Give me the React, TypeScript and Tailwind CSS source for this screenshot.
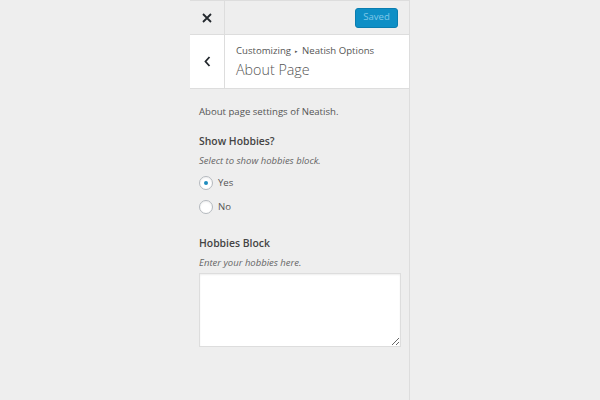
import React from "react";

function Radio({ label, checked }: { label: string; checked?: boolean }) {
  return (
    <label className="flex h-[24px] items-center gap-[5px] text-[9.6px] text-[#555]">
      <span className="flex h-[14px] w-[14px] items-center justify-center rounded-full border border-[#b4b9be] bg-white shadow-[inset_0_1px_2px_rgba(0,0,0,0.07)]">
        {checked && <span className="h-[4px] w-[4px] rounded-full bg-[#1e8cbe]" />}
      </span>
      {label}
    </label>
  );
}

export default function App() {
  return (
    <div
      className="flex h-[400px] w-[600px] bg-[#eeeeee]"
      style={{ fontFamily: '"Open Sans", "Liberation Sans", sans-serif' }}
    >
      <div className="ml-[190px] flex h-full w-[220px] flex-col border-r border-[#dddddd]">
        {/* top bar */}
        <div className="flex h-[35px] items-center border-b border-t border-[#dddddd]">
          <div className="flex h-full w-[35px] items-center justify-center border-r border-[#dddddd]">
            <svg width="10" height="10" viewBox="0 0 10 10">
              <path d="M1 1L9 9M9 1L1 9" stroke="#23282d" strokeWidth="1.8" />
            </svg>
          </div>
          <div className="ml-auto mr-[11px] flex h-[20px] w-[43px] items-center justify-center rounded-[3px] border border-[#0a7db0] bg-[#0e8fc6] text-[9.6px] text-[#7fc8e8]">
            Saved
          </div>
        </div>

        {/* back / title */}
        <div className="flex h-[54px] border-b border-[#dddddd] bg-white">
          <div className="flex h-full w-[35px] items-center justify-center border-r border-[#dddddd]">
            <svg width="7" height="11" viewBox="0 0 7 11">
              <path d="M5.5 1L1.5 5.5L5.5 10" fill="none" stroke="#23282d" strokeWidth="1.8" />
            </svg>
          </div>
          <div className="flex flex-col justify-center pl-[11px] pt-[1px]">
            <div className="flex items-center text-[9.6px] leading-[14px] text-[#555]">
              Customizing
              <span className="mx-[4px] text-[5px] leading-none">▸</span>
              Neatish Options
            </div>
            <div className="mt-[2px] text-[14.3px] font-light leading-[20px] text-[#555]">
              About Page
            </div>
          </div>
        </div>

        {/* content */}
        <div className="flex flex-col px-[9px] pt-[16px]">
          <p className="text-[9.6px] leading-[14px] text-[#555]">About page settings of Neatish.</p>

          <div className="mt-[15px] text-[10.4px] font-semibold leading-[14px] text-[#444]">
            Show Hobbies?
          </div>
          <div className="mt-[6px] text-[9.5px] italic leading-[14px] text-[#666]">
            Select to show hobbies block.
          </div>
          <div className="mt-[3px] flex flex-col">
            <Radio label="Yes" checked />
            <Radio label="No" />
          </div>

          <div className="mt-[17px] text-[10.4px] font-semibold leading-[14px] text-[#444]">
            Hobbies Block
          </div>
          <div className="mt-[6px] text-[9.5px] italic leading-[14px] text-[#666]">
            Enter your hobbies here.
          </div>
          <textarea className="mt-[3px] h-[74px] w-[202px] resize-y border border-[#dddddd] bg-white shadow-[inset_0_1px_2px_rgba(0,0,0,0.07)] outline-none" />
        </div>
      </div>
    </div>
  );
}
